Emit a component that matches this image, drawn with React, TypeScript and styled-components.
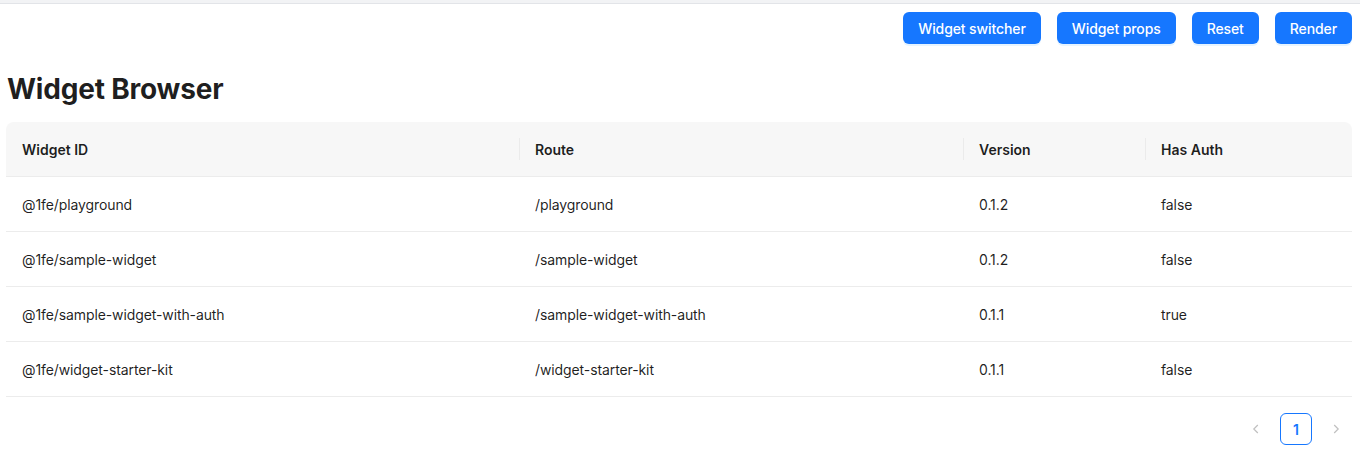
import React from "react";
import styled, { createGlobalStyle } from "styled-components";

const GlobalStyle = createGlobalStyle`
  html, body { margin: 0; padding: 0; background: #ffffff; }
  body {
    font-family: Inter, "Noto Sans", "Liberation Sans", sans-serif;
    font-size: 14px;
    color: rgba(0, 0, 0, 0.88);
  }
  * { box-sizing: border-box; }
`;

const TopStrip = styled.div`
  height: 4px;
  background: #f2f3f5;
  border-bottom: 1px solid #e2e4e8;
`;

const Page = styled.div`
  padding: 0 8px 0 6px;
`;

const Toolbar = styled.div`
  display: flex;
  justify-content: flex-end;
  gap: 16px;
  padding-top: 8px;
`;

const PrimaryButton = styled.button`
  height: 32px;
  padding: 0 15px;
  border: none;
  border-radius: 6px;
  background: #1677ff;
  color: #ffffff;
  font-family: inherit;
  font-size: 14px;
  font-weight: 500;
  letter-spacing: -0.1px;
  cursor: pointer;
  box-shadow: 0 2px 0 rgba(5, 145, 255, 0.1);
`;

const Title = styled.h2`
  margin: 25px 0 13px 1px;
  font-size: 28px;
  line-height: 40px;
  font-weight: 700;
  color: rgba(0, 0, 0, 0.88);
  letter-spacing: -0.2px;
`;

const Table = styled.table`
  width: 100%;
  border-collapse: separate;
  border-spacing: 0;
  table-layout: fixed;
`;

const HeadCell = styled.th<{ $first?: boolean; $last?: boolean }>`
  position: relative;
  height: 55px;
  padding: 0 16px;
  text-align: left;
  font-weight: 600;
  background: #f7f7f7;
  border-bottom: 1px solid #ececec;
  border-top-left-radius: ${(p) => (p.$first ? "8px" : "0")};
  border-top-right-radius: ${(p) => (p.$last ? "8px" : "0")};

  &::before {
    content: "";
    display: ${(p) => (p.$first ? "none" : "block")};
    position: absolute;
    left: 0;
    top: 50%;
    width: 1px;
    height: 22px;
    transform: translateY(-50%);
    background: #ebebeb;
  }
`;

const Cell = styled.td`
  height: 55px;
  padding: 0 16px;
  border-bottom: 1px solid #ececec;
  color: rgba(0, 0, 0, 0.88);
  letter-spacing: -0.1px;
`;

const Pager = styled.ul`
  display: flex;
  justify-content: flex-end;
  align-items: center;
  gap: 8px;
  list-style: none;
  margin: 16px 0 0;
  padding: 0;
`;

const PagerItem = styled.li<{ $active?: boolean }>`
  width: 32px;
  height: 32px;
  display: flex;
  align-items: center;
  justify-content: center;
  border-radius: 6px;
  border: 1px solid ${(p) => (p.$active ? "#1677ff" : "transparent")};
  color: ${(p) => (p.$active ? "#1677ff" : "rgba(0,0,0,0.25)")};
  font-weight: 600;
  font-size: 14px;
`;

const rows = [
  ["@1fe/playground", "/playground", "0.1.2", "false"],
  ["@1fe/sample-widget", "/sample-widget", "0.1.2", "false"],
  ["@1fe/sample-widget-with-auth", "/sample-widget-with-auth", "0.1.1", "true"],
  ["@1fe/widget-starter-kit", "/widget-starter-kit", "0.1.1", "false"],
];

const Chevron = ({ dir }: { dir: "left" | "right" }) => (
  <svg width="12" height="12" viewBox="0 0 12 12" fill="none">
    <path
      d={dir === "left" ? "M7.8 2 L3.8 6 L7.8 10" : "M4.2 2 L8.2 6 L4.2 10"}
      stroke="currentColor"
      strokeWidth="1.2"
    />
  </svg>
);

export default function App() {
  return (
    <>
      <GlobalStyle />
      <TopStrip />
      <Page>
        <Toolbar>
          <PrimaryButton>Widget switcher</PrimaryButton>
          <PrimaryButton>Widget props</PrimaryButton>
          <PrimaryButton>Reset</PrimaryButton>
          <PrimaryButton>Render</PrimaryButton>
        </Toolbar>
        <Title>Widget Browser</Title>
        <Table>
          <colgroup>
            <col style={{ width: 513 }} />
            <col style={{ width: 444 }} />
            <col style={{ width: 182 }} />
            <col />
          </colgroup>
          <thead>
            <tr>
              <HeadCell $first>Widget ID</HeadCell>
              <HeadCell>Route</HeadCell>
              <HeadCell>Version</HeadCell>
              <HeadCell $last>Has Auth</HeadCell>
            </tr>
          </thead>
          <tbody>
            {rows.map((r) => (
              <tr key={r[0]}>
                {r.map((c, i) => (
                  <Cell key={i}>{c}</Cell>
                ))}
              </tr>
            ))}
          </tbody>
        </Table>
        <Pager>
          <PagerItem>
            <Chevron dir="left" />
          </PagerItem>
          <PagerItem $active>1</PagerItem>
          <PagerItem>
            <Chevron dir="right" />
          </PagerItem>
        </Pager>
      </Page>
    </>
  );
}
